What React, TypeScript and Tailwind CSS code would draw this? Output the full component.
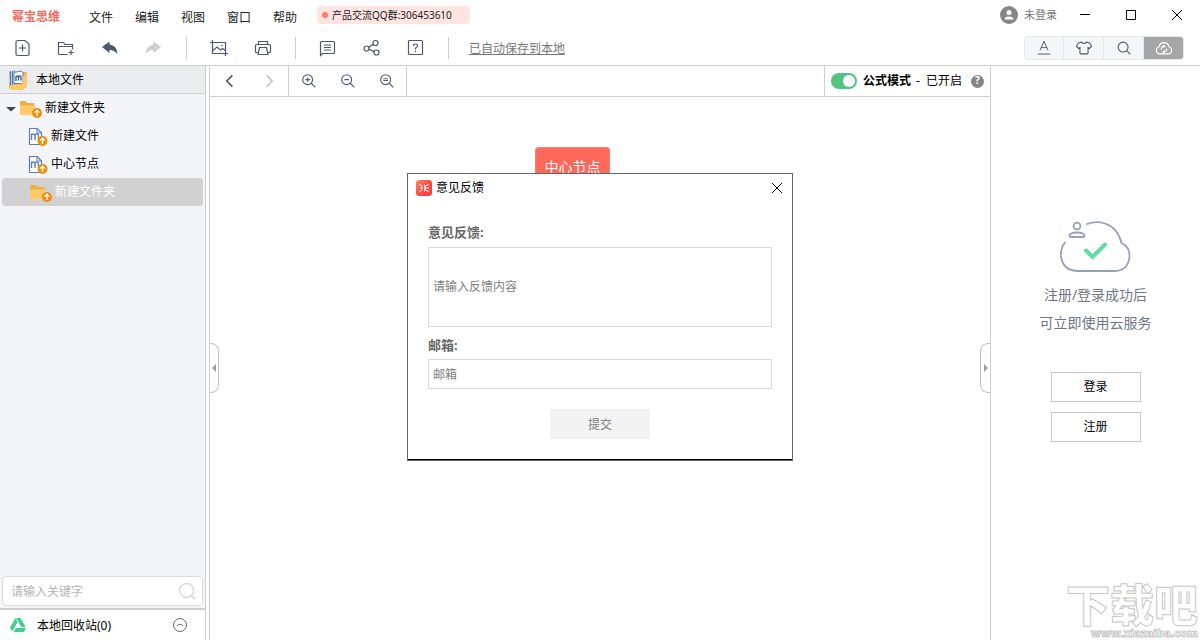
import { useState } from "react";
import type { ReactNode } from "react";

const MENUS = ["文件", "编辑", "视图", "窗口", "帮助"];

type IconProps = { children: ReactNode; className?: string };

const Icon = ({ children, className = "h-5 w-5" }: IconProps) => (
  <svg viewBox="0 0 20 20" className={className} fill="none" stroke="currentColor" strokeWidth="1.2" aria-hidden="true">
    {children}
  </svg>
);

const ToolButton = ({ label, children }: { label: string; children: ReactNode }) => (
  <button type="button" aria-label={label} className="flex h-8 w-11 items-center justify-center text-[#4f586b]">
    <Icon>{children}</Icon>
  </button>
);

const Divider = () => <div className="mx-2.5 h-[22px] w-px bg-[#cfcfcf]" />;

const UploadBadge = ({ x, y }: { x: number; y: number }) => (
  <g>
    <circle cx={x} cy={y} r="5" fill="#f08c0a" />
    <path d={`M${x} ${y + 3}v-5M${x - 2.4} ${y - 0.4}L${x} ${y - 2.8}l2.4 2.4`} stroke="#fff" strokeWidth="1.3" fill="none" />
  </g>
);

const FolderIcon = () => (
  <svg viewBox="0 0 22 20" className="h-5 w-[22px]" aria-hidden="true">
    <path d="M0 4.500Q0 3 1.500 3h4L7.500 5H13.500Q14.500 5 14.500 6V17H0z" fill="#eeb04a" />
    <path d="M0 7.500H13.500L15 9V17H0z" fill="#ffcb66" />
    <UploadBadge x={17} y={15} />
  </svg>
);

const FileIcon = () => (
  <svg viewBox="0 0 20 20" className="h-5 w-5" aria-hidden="true">
    <path d="M1.500 2.500H9L13.500 7V18.500H1.500z" fill="#fff" stroke="#5b7fb8" strokeWidth="1.2" strokeLinejoin="round" />
    <path d="M9 2.500V7h4.500" fill="none" stroke="#5b7fb8" />
    <path d="M3.500 14V7.500M3.500 9.500Q3.500 8 5 8T7 9.500V14M7 9.500Q7 8 8.700 8T10.500 9.500V14" fill="none" stroke="#5b7fb8" strokeWidth="1.4" />
    <UploadBadge x={14.5} y={15} />
  </svg>
);

const LibraryIcon = () => (
  <svg viewBox="0 0 20 22" className="h-[22px] w-5" aria-hidden="true">
    <path d="M11 3h6.500Q19 3 19 4.500V17l-4 3.500H3L1 18.500V14z" fill="#f0ad4a" />
    <path d="M1.500 2.500L7 1.500v14L2 17.500z" fill="#5478b2" />
    <path d="M3.500 2v14.500M5.500 1.800v14" stroke="#d7e4f5" strokeWidth=".8" />
    <path d="M6 3.500L13 2l2 1.500V14.500H6z" fill="#fff" stroke="#5b7fb8" />
    <path d="M8 12V7M8 8.500Q8.500 7 9.500 7T10.500 8.500v3M10.500 8.500q.5-1.500 1.500-1.500T13 8.500v3" fill="none" stroke="#35558c" strokeWidth="1.3" />
    <path d="M1.500 16.500L13 15l2-1.500V7.500l4-3V17l-4 3.500H3z" fill="#ffc862" />
  </svg>
);

const TitleBar = () => (
  <header className="flex h-8 items-start justify-between">
    <div className="flex">
      <span className="ml-3 h-8 pt-px text-xs font-bold leading-8 text-[#f26b60]">幂宝思维</span>
      <nav className="ml-[18px] flex">
        {MENUS.map((menu) => (
          <button key={menu} type="button" className="h-8 w-[46px] pt-1 text-xs text-[#222]">
            {menu}
          </button>
        ))}
      </nav>
      <div className="ml-[9px] mt-1.5 flex h-[18px] w-[153px] items-center rounded bg-[#ffe4e2] pl-[5px] text-[10px] text-[#222]">
        <span className="mr-1 h-1.5 w-1.5 rounded-full bg-[#ff7a6c]" />
        产品交流QQ群:306453610
      </div>
    </div>
    <div className="flex h-[30px]">
      <button type="button" className="mr-[5px] flex items-center gap-1.5 text-[11px] text-[#777]">
        <svg viewBox="0 0 18 18" className="h-[18px] w-[18px]" aria-hidden="true">
          <circle cx="9" cy="9" r="9" fill="#858585" />
          <circle cx="9" cy="6.500" r="2.500" fill="#fff" />
          <path d="M4.500 13.500Q4.500 10.500 9 10.500t4.500 3z" fill="#fff" />
        </svg>
        未登录
      </button>
      <button type="button" aria-label="最小化" className="flex w-[46px] items-center justify-center text-black">
        <svg viewBox="0 0 12 12" className="h-3 w-3" stroke="currentColor"><path d="M1 5.500h10" /></svg>
      </button>
      <button type="button" aria-label="最大化" className="flex w-[46px] items-center justify-center text-black">
        <svg viewBox="0 0 12 12" className="h-3 w-3" stroke="currentColor" fill="none"><path d="M1.500 1.500h9v9h-9z" /></svg>
      </button>
      <button type="button" aria-label="关闭" className="flex w-[46px] items-center justify-center text-black">
        <svg viewBox="0 0 12 12" className="h-3 w-3" stroke="currentColor"><path d="M1 1l10 10M11 1L1 11" /></svg>
      </button>
    </div>
  </header>
);

const ToolBar = () => (
  <div className="flex h-[34px] items-center justify-between border-b border-[#cfcfcf] pb-0.5">
    <div className="flex items-center">
      <ToolButton label="新建文件">
        <path d="M5 2.500H13L17 6V16Q17 17.500 15.500 17.500H5.500Q4 17.500 4 16V4Q4 2.500 5.500 2.500M10.500 6.500v7M7 10h7" />
      </ToolButton>
      <ToolButton label="新建文件夹">
        <path d="M11.500 16.500H3.500Q2.500 16.500 2.500 15.500V4.500H7.500L9 6.500H16.500V11.500M2.500 8.500H16.500M15 12v5M12.500 14.500h5" />
      </ToolButton>
      <ToolButton label="撤销">
        <path d="M2 9L9.500 3.500v3Q17 7.500 17.500 16Q14 12 9.500 12v3z" fill="currentColor" stroke="none" />
      </ToolButton>
      <ToolButton label="重做">
        <path d="M17 9L9.500 3.500v3Q2 7.500 1.500 16Q5 12 9.500 12v3z" fill="#cfcfcf" stroke="none" />
      </ToolButton>
      <Divider />
      <ToolButton label="导出图片">
        <path d="M1 4.500H16.500V18M3.500 2V15.500H19M3.500 13L8 9l3.500 3 2-1.500L17 13" />
        <circle cx="13" cy="7.500" r=".8" fill="currentColor" stroke="none" />
      </ToolButton>
      <ToolButton label="打印">
        <path d="M5.500 6.500V3.500h9v3M5.500 14.500H3.500Q2.500 14.500 2.500 13.500V7.500Q2.500 6.500 3.500 6.500H16.500Q17.500 6.500 17.500 7.500V13.500Q17.500 14.500 16.500 14.500H14.500M6.500 9.500h7L15 16.500H5z" />
      </ToolButton>
      <Divider />
      <ToolButton label="意见反馈">
        <path d="M2.500 17.500V4.500Q2.500 3.500 3.500 3.500H15.500Q16.500 3.500 16.500 4.500V14.500Q16.500 15.500 15.500 15.500H4.500zM6 7h7M6 9.500h7M6 12h7" />
      </ToolButton>
      <ToolButton label="分享">
        <circle cx="4.500" cy="10.500" r="2.500" />
        <circle cx="13.500" cy="5" r="2.500" />
        <circle cx="14.500" cy="14.500" r="2.500" />
        <path d="M6.700 9.200l4.600-2.900M7 11.300l5.100 2.300" />
      </ToolButton>
      <ToolButton label="帮助">
        <rect x="2.500" y="2.500" width="14" height="14" rx="1" />
        <path d="M7.500 8Q7.500 6 9.500 6t2 2Q11.500 9 9.500 10v1.500M9.500 12.800v1.400" />
      </ToolButton>
      <Divider />
      <a href="#saved" className="ml-2.5 pt-0.5 text-xs text-[#777] underline">已自动保存到本地</a>
    </div>
    <div className="mr-4 flex h-6 divide-x divide-[#e6e7e9] overflow-hidden rounded border border-[#e6e7e9] bg-[#f5f6f8] text-[#4f586b]">
      <button type="button" aria-label="字体" className="flex w-[39px] items-center justify-center">
        <Icon className="h-4 w-4"><path d="M5 13L10 1.500 15 13M6.500 9.500h7M2 17.500h16" /></Icon>
      </button>
      <button type="button" aria-label="主题" className="flex w-10 items-center justify-center">
        <Icon className="h-[18px] w-[18px]"><path d="M7 3.500Q10 6.500 13 3.500L16 4.500 18.500 8 16 10.500 14.500 9.500V15.500Q14.500 16.500 13.500 16.500H6.500Q5.500 16.500 5.500 15.500V9.500L4 10.500 1.500 8 4 4.500z" /></Icon>
      </button>
      <button type="button" aria-label="搜索" className="flex w-10 items-center justify-center">
        <Icon className="h-[18px] w-[18px]"><circle cx="9" cy="9" r="5.500" /><path d="M13 13l4 4" /></Icon>
      </button>
      <button type="button" aria-label="云同步" className="flex w-[39px] items-center justify-center bg-[#a6a6a6] text-white">
        <Icon className="h-[18px] w-[18px]">
          <path d="M5 16.500Q1.500 16 1.500 12.500 1.500 9.500 4.500 8.500 5.500 4 10 4t5.500 4.500Q18.500 9.500 18.500 12.500 18.500 16 15 16.500z" />
          <path d="M7 12Q6.500 8 10.500 8M13 10.500Q13.500 14 9.500 14.500M9 6.500l2 1.500-2 1.500M11 13l-2 1.500 1.500 1" />
        </Icon>
      </button>
    </div>
  </div>
);

const Sidebar = () => (
  <aside className="flex w-[206px] shrink-0 flex-col border-r border-[#cfcfcf] bg-[#f4f5f8] text-xs text-black">
    <div className="flex h-7 items-center gap-2 border-b border-[#cfcfcf] bg-[#ebecee] pl-2">
      <LibraryIcon />
      <span className="pt-px">本地文件</span>
    </div>
    <ul className="flex-1">
      <li className="flex h-7 items-center gap-[3px] pl-[5px]">
        <svg viewBox="0 0 12 12" className="h-3 w-3" aria-hidden="true"><path d="M1 5h10L6 9.500z" fill="#444" /></svg>
        <FolderIcon />
        新建文件夹
      </li>
      <li className="flex h-7 items-center gap-[3px] pl-7">
        <FileIcon />
        新建文件
      </li>
      <li className="flex h-7 items-center gap-[3px] pl-7">
        <FileIcon />
        中心节点
      </li>
      <li className="mx-0.5 flex h-7 items-center gap-[3px] rounded-sm bg-[#d1d1d1] pl-7 text-white">
        <FolderIcon />
        新建文件夹
      </li>
    </ul>
    <div className="mx-0.5 mb-0.5 flex h-[30px] items-center rounded border border-[#dcdcdc] bg-white pl-2 pr-1.5">
      <input aria-label="关键字" placeholder="请输入关键字" className="min-w-0 flex-1 pt-0.5 outline-none placeholder:text-[#b5b5b5]" />
      <svg viewBox="0 0 18 18" className="h-[18px] w-[18px]" fill="none" stroke="#dadada" strokeWidth="1.500" aria-hidden="true">
        <circle cx="8.500" cy="8.500" r="7" />
        <path d="M14 14l3 3" strokeWidth="2" />
      </svg>
    </div>
    <div className="flex h-8 items-center border-t-2 border-[#cfcfcf] bg-white pl-2.5 pr-[18px]">
      <svg viewBox="0 0 16 14" className="h-3.5 w-4" fill="#3fcf8e" aria-hidden="true">
        <path d="M5.500 0L0 9.500 2.300 13.500 7.700 4z" />
        <path d="M6.200 0h4.300L15.700 9H11.200z" />
        <path d="M5.800 10H16l-2.200 4H3.600z" />
      </svg>
      <span className="ml-[11px] flex-1 pt-0.5">本地回收站(0)</span>
      <button type="button" aria-label="展开回收站">
        <svg viewBox="0 0 14 14" className="h-3.5 w-3.5" fill="none" stroke="#666" aria-hidden="true">
          <circle cx="7" cy="7" r="6.500" />
          <path d="M4 8q3-3.500 6 0" />
        </svg>
      </button>
    </div>
  </aside>
);

const zoomMarks = [
  { label: "放大", mark: "M8.500 6v5M6 8.500h5" },
  { label: "缩小", mark: "M6 8.500h5" },
  { label: "实际大小", mark: "M6 7.500h5M6 9.500h5" },
];

const Canvas = () => {
  const [formulaMode, setFormulaMode] = useState(true);

  return (
    <main className="relative ml-[3px] flex min-w-0 flex-1 flex-col border-l border-[#cfcfcf]">
      <div className="flex h-[31px] justify-between border-b border-[#cfcfcf] text-[#4f586b]">
        <div className="flex">
          <div className="flex border-r border-[#cfcfcf]">
            <button type="button" aria-label="后退" className="flex w-10 items-center justify-center">
              <Icon className="h-4 w-4"><path d="M13 3L6 10l7 7" strokeWidth="2" /></Icon>
            </button>
            <button type="button" aria-label="前进" className="flex w-[38px] items-center justify-center text-[#c4c4c4]">
              <Icon className="h-4 w-4"><path d="M7 3l7 7-7 7" strokeWidth="2" /></Icon>
            </button>
          </div>
          <div className="flex border-r border-[#cfcfcf]">
            {zoomMarks.map(({ label, mark }) => (
              <button key={label} type="button" aria-label={label} className="flex w-[39px] items-center justify-center">
                <Icon className="h-[18px] w-[18px]">
                  <circle cx="8.500" cy="8.500" r="5.500" />
                  <path d={`M12.500 12.500l4.500 4.500${mark}`} />
                </Icon>
              </button>
            ))}
          </div>
        </div>
        <div className="flex items-center border-l border-[#cfcfcf] px-1.5 text-xs text-black">
          <label className="flex items-center">
            <input
              type="checkbox"
              checked={formulaMode}
              onChange={() => setFormulaMode(!formulaMode)}
              className="peer sr-only"
            />
            <span className="mr-1.5 flex h-4 w-[26px] items-center rounded-full bg-[#c4c4c4] px-0.5 peer-checked:justify-end peer-checked:bg-[#50c583]">
              <span className="h-3 w-3 rounded-full bg-white" />
            </span>
            <b>公式模式</b>
            <span className="ml-1 flex gap-1.5 px-px">
              <span>-</span>
              <span>{formulaMode ? "已开启" : "已关闭"}</span>
            </span>
          </label>
          <button
            type="button"
            aria-label="公式模式说明"
            className="ml-2 flex h-[13px] w-[13px] items-center justify-center rounded-full bg-[#858585] text-[10px] font-bold text-white"
          >
            ?
          </button>
        </div>
      </div>
      <div className="relative flex-1">
        <div className="absolute left-[325px] top-[50px] flex h-10 w-[75px] items-center justify-center rounded bg-[#ff6759] text-sm text-white shadow-[inset_0_0_3px_#ff9d93]">
          中心节点
        </div>
      </div>
      <button type="button" aria-label="收起左侧栏" className="absolute left-0 top-[277px] flex h-[50px] w-[9px] items-center justify-center rounded-r-lg border border-l-0 border-[#c4c4c4]">
        <svg viewBox="0 0 6 10" className="h-2.5 w-1.5" fill="#999" aria-hidden="true"><path d="M5 1v8L1 5z" /></svg>
      </button>
      <button type="button" aria-label="收起右侧栏" className="absolute right-0 top-[277px] flex h-[50px] w-[10px] items-center justify-center rounded-l-lg border border-r-0 border-[#c4c4c4]">
        <svg viewBox="0 0 6 10" className="h-2.5 w-1.5" fill="#999" aria-hidden="true"><path d="M1 1v8L5 5z" /></svg>
      </button>
    </main>
  );
};

const CloudPanel = () => (
  <aside className="relative flex w-[210px] shrink-0 flex-col items-center overflow-hidden border-l border-[#cfcfcf] pt-[155px]">
    <svg viewBox="1 0 72 52" className="h-[52px] w-[72px]" fill="none" stroke="#98a1bb" strokeWidth="1.800" aria-hidden="true">
      <path d="M28 3Q37-.5 46 2.500 59 7 62.500 22 71 26 70.500 36 69 49 57 50H18Q4 49 2 36 1 28 6 21.500" strokeLinecap="round" />
      <circle cx="18" cy="5" r="3.400" />
      <path d="M11.500 16Q10.500 16 10.500 14.500 11.500 11.500 18 11.500t7.500 3Q25.500 16 24.500 16z" strokeLinejoin="round" />
      <path d="M27 29.500l6.500 6.500L46 23.500" stroke="#62dba4" strokeWidth="4" strokeLinecap="round" />
    </svg>
    <p className="mt-2 text-center text-sm leading-7 text-[#6f7685]">
      注册/登录成功后
      <br />
      可立即使用云服务
    </p>
    <button type="button" className="mt-[35px] h-[30px] w-[90px] border border-[#c9c9c9] text-xs text-black">登录</button>
    <button type="button" className="mt-2.5 h-[30px] w-[90px] border border-[#c9c9c9] text-xs text-black">注册</button>
    <div className="absolute bottom-0 right-0 flex flex-col items-end pr-0.5 font-black text-white [-webkit-text-stroke:1px_#c8c8c8]">
      <span className="text-[44px] leading-[42px]">下载吧</span>
      <span className="text-[11px] leading-[14px]">www.xiazaiba.com</span>
    </div>
  </aside>
);

const FeedbackDialog = () => (
  <div role="dialog" aria-label="意见反馈" className="w-[386px] border border-[#666] bg-white text-xs">
    <div className="flex h-7 items-center px-2 text-black">
      <svg viewBox="0 0 16 16" className="h-4 w-4" aria-hidden="true">
        <defs>
          <linearGradient id="brand" x1="0" y1="0" x2="1" y2="1">
            <stop offset="0" stopColor="#ff8a62" />
            <stop offset=".5" stopColor="#ff4b42" />
            <stop offset="1" stopColor="#fb3a3f" />
          </linearGradient>
        </defs>
        <rect width="16" height="16" rx="3" fill="url(#brand)" />
        <path d="M3 4.500Q6.500 4.500 6.500 8T3 11.500M3.500 8h3M13 4.500Q9 5 9 8t4 3.500M8.500 4.500L9 8l-.5 3.500M9 8h4" fill="none" stroke="#fff" strokeWidth=".9" />
      </svg>
      <span className="ml-1 flex-1">意见反馈</span>
      <button type="button" aria-label="关闭对话框" className="mr-px">
        <svg viewBox="0 0 12 12" className="h-3 w-3" stroke="currentColor"><path d="M1 1l10 10M11 1L1 11" /></svg>
      </button>
    </div>
    <form className="flex flex-col border-b border-black px-5 py-5">
      <label htmlFor="content" className="mb-[5px] text-[13px] font-bold leading-5 text-[#666]">意见反馈:</label>
      <textarea
        id="content"
        placeholder="请输入反馈内容"
        className="h-20 resize-none border border-[#d9d9d9] px-1 pt-[31px] leading-4 outline-none placeholder:text-[#808080]"
      />
      <label htmlFor="email" className="mb-1 mt-2 text-[13px] font-bold leading-5 text-[#666]">邮箱:</label>
      <input
        id="email"
        type="email"
        placeholder="邮箱"
        className="h-[30px] border border-[#d9d9d9] px-1 outline-none placeholder:text-[#808080]"
      />
      <button type="button" className="mt-5 h-[30px] w-[100px] self-center bg-[#f3f3f3] pt-0.5 text-[#808080]">提交</button>
    </form>
  </div>
);

const App = () => (
  <div className="relative flex h-screen flex-col overflow-hidden bg-white font-['Noto_Sans','Noto_Sans_CJK_SC',sans-serif]">
    <TitleBar />
    <ToolBar />
    <div className="flex min-h-0 flex-1">
      <Sidebar />
      <Canvas />
      <CloudPanel />
    </div>
    <div className="absolute inset-0 flex items-center justify-center pb-1.5">
      <FeedbackDialog />
    </div>
  </div>
);

export default App;
